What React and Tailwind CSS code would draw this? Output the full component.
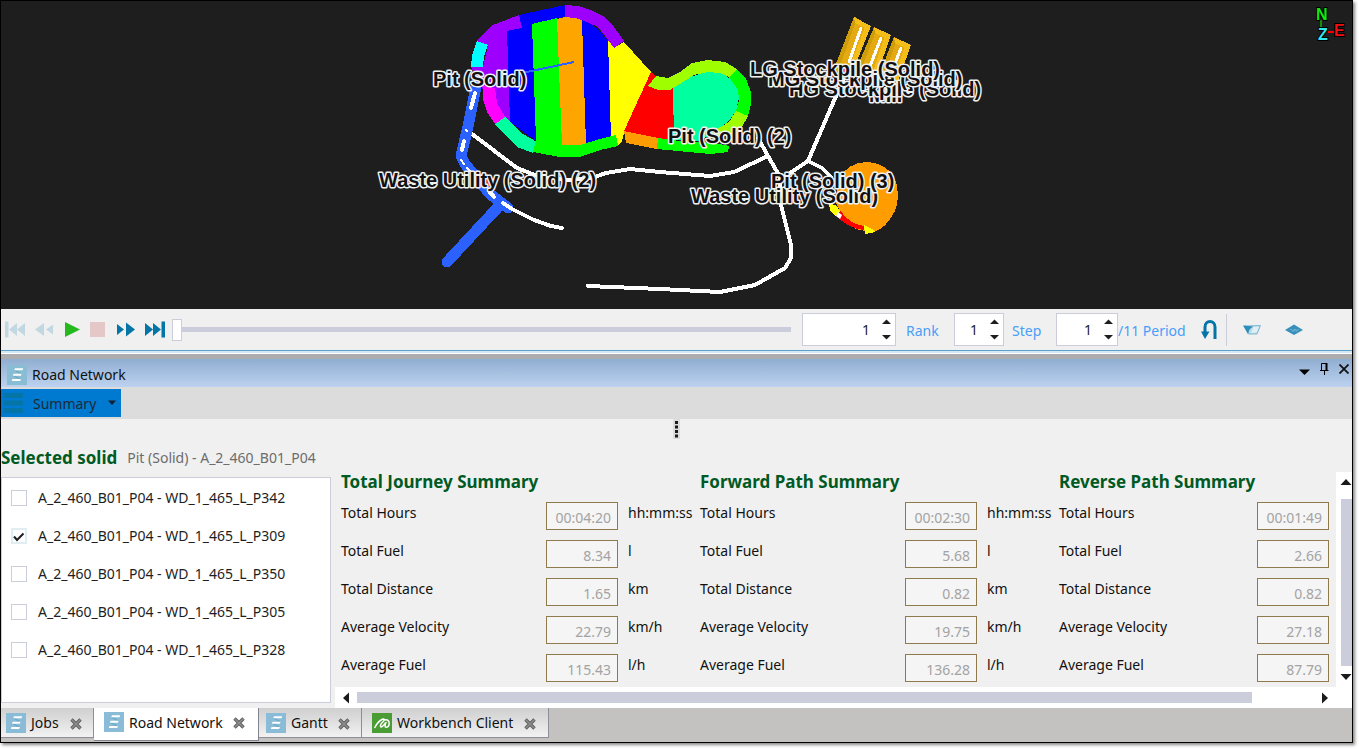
import React, { useState } from "react";

const PATHS = ["P342", "P309", "P350", "P305", "P328"];

const SUMMARIES = [
  { title: "Total Journey Summary", values: ["00:04:20", "8.34", "1.65", "22.79", "115.43"], units: true },
  { title: "Forward Path Summary", values: ["00:02:30", "5.68", "0.82", "19.75", "136.28"], units: true },
  { title: "Reverse Path Summary", values: ["00:01:49", "2.66", "0.82", "27.18", "87.79"], units: false },
];

const METRICS = [
  ["Total Hours", "hh:mm:ss"],
  ["Total Fuel", "l"],
  ["Total Distance", "km"],
  ["Average Velocity", "km/h"],
  ["Average Fuel", "l/h"],
];

const LABELS = [
  ["Mill", 869, 102],
  ["HG Stockpile (Solid)", 789, 96],
  ["MG Stockpile (Solid)", 768, 86],
  ["LG Stockpile (Solid)", 750, 76],
  ["Pit (Solid)", 433, 86],
  ["Pit (Solid) (2)", 668, 143],
  ["Waste Utility (Solid) (2)", 379, 187],
  ["Waste Utility (Solid)", 691, 203],
  ["Pit (Solid) (3)", 771, 188],
];

function MapView() {
  return (
    <svg viewBox="1 1 1351 308" className="block h-full w-full" role="img" aria-label="Mine map">
      <g shapeRendering="crispEdges">
        {/* main pit */}
        <polygon fill="#9d00ff" points="477,41 483,34 493,25 519,15 523,28 508,31 511,122 505,118 497,103 495,90 483,90 471,67 483,67 488,45" />
        <polygon fill="#9d00ff" points="565,5 578,6 591,10 603,16 614,27 624,41 614,48 608,40 598,27 582,20 565,17" />
        <polygon fill="#0000ff" points="519,15 565,5 565,17 557,18 532,24 536,141 510,122 507,31 522,28" />
        <polygon fill="#00ffff" points="477,41 488,45 484,56 483,67 471,67 472,55" />
        <polygon fill="#ff00ff" points="483,86 495,88 497,103 505,117 495,124 487,112 483,99" />
        <polygon fill="#00ff9f" points="495,124 505,117 523,134 537,142 533,153 517,147" />
        <polygon fill="#00ff00" points="532,24 557,18 562,145 536,141" />
        <polygon fill="#ffa500" points="557,19 565,17 575,18 582,20 586,145 562,146" />
        <polygon fill="#0000ff" points="582,20 592,25 600,31 608,41 611,138 586,143" />
        <polygon fill="#ffff00" points="608,40 614,48 624,42 651,72 624,133 622,141 618,146 611,138" />
        <polygon fill="#00ff00" points="536,141 562,145 580,145 600,139 616,135 618,146 600,150 580,157 560,157 533,152" />
        <path d="M522 73L574 62" stroke="#2b5fff" strokeWidth="2" />
        {/* east pit */}
        <polygon fill="#ff0000" points="651,72 656,77 648,85 673,88 674,141 658,138 624,131" />
        <polygon fill="#00ff9f" points="673,88 690,77 708,71 722,73 732,80 738,90 739,98 736,111 728,122 714,132 700,141 674,140" />
        <polygon fill="#9fff00" points="656,76 668,78 680,72 692,63 708,60 725,62 737,69 729,77 720,73 708,72 694,75 680,84 670,90 658,90 648,86" />
        <polygon fill="#00ff00" points="737,69 746,79 751,92 751,104 748,116 736,111 739,100 738,90 729,77" />
        <polygon fill="#9fff00" points="748,116 742,127 732,134 718,138 715,130 729,122 736,111" />
        <polygon fill="#ff9d00" points="624,131 658,138 657,149 626,143" />
        <polygon fill="#00ff00" points="658,138 680,141 715,143 729,146 728,152 710,154 657,149" />
        {/* south-east pit */}
        <path fill="#ff9d00" d="M867 162C878 162 889 168 894 177C899 187 899 202 895 211C889 222 882 231 872 232L855 229L842 215L836 203L838 180C844 168 855 162 867 162Z" />
        <path fill="#ff0000" d="M835 215L840 210Q850 225 866 226L864 230Q849 229 835 215Z" />
        <polygon fill="#ffff00" points="829,203 837,206 840,211 836,216 830,211" />
        <polygon fill="#ffff00" points="864,225 872,229 875,232 865,234" />
        {/* stockpiles */}
        <polygon fill="#e5aa12" points="854,17 871,26 853,71 834,69" />
        <polygon fill="#cf9c0a" points="854,17 857,18 838,72 834,69" />
        <polygon fill="#f4bd18" points="854,17 871,26 869,30 855,23" />
        <polygon fill="#f4bd18" points="866,24 871,26 853,71 849,69" />
        <polygon fill="#e5aa12" points="874,27 891,35 876,78 856,70" />
        <polygon fill="#cf9c0a" points="874,27 877,29 860,72 856,70" />
        <polygon fill="#f4bd18" points="874,27 891,35 889,40 875,33" />
        <polygon fill="#f4bd18" points="886,33 891,35 876,78 872,74" />
        <polygon fill="#e5aa12" points="894,37 911,45 897,84 879,75" />
        <polygon fill="#cf9c0a" points="894,37 897,39 884,76 879,75" />
        <polygon fill="#f4bd18" points="894,37 911,45 909,50 895,43" />
        <polygon fill="#f4bd18" points="906,43 911,45 897,84 893,80" />
        {/* haul roads */}
        <g fill="none" stroke="#fff" strokeLinecap="round" strokeLinejoin="round" strokeWidth="4">
          <path d="M472 134L517 168L540 177L570 180L592 178L606 173L630 169L660 172L710 176L734 172L768 156" />
          <path d="M758 138L768 156L780 177L781 205L791 245L791 258L785 268L755 285L720 292L660 289L588 286" />
          <path d="M781 179L808 161L822 168L831 177M808 161L836 96L849 68" />
          <path d="M861 28L849 62M881 38L870 66M901 48L894 66" strokeWidth="3" />
        </g>
        {/* highlighted journey */}
        <g fill="none" stroke="#2b62ff" strokeLinecap="round" strokeLinejoin="round" strokeWidth="11">
          <path d="M477 82L469 122L461 156L465 164L490 194L508 208M500 205L447 262" />
        </g>
        <g fill="none" stroke="#fff" strokeLinecap="round" strokeWidth="4">
          <path d="M475 93L471 108M464 141L462 150M489 191L494 197M503 203L512 209L534 220L551 226L562 228" />
          <path d="M466 130L467 131M461 160L464 164M467 168L470 171" strokeWidth="2" />
        </g>
      </g>
      <path fill="#fff" d="M838 212l4 3-2 4-4-3z" />
      <path fill="#e22" d="M837 68h8v4h-8zM860 78h5v4h-5zM776 198h6v5h-6zM484 180h8v6h-8z" />
      <g fontFamily="'Liberation Sans', Arial, sans-serif" fontSize="20" fontWeight="700" fill="#111" stroke="#f1f1f1" strokeWidth="3" paintOrder="stroke" strokeLinejoin="round">
        {LABELS.map(([text, x, y]) => (
          <text key={text} x={x} y={y}>{text}</text>
        ))}
      </g>
      {/* orientation axes */}
      <path d="M1321 20V30" stroke="#0f0" strokeWidth="1" />
      <path d="M1328 32H1334" stroke="#f00" strokeWidth="2" />
      <g fontFamily="'Liberation Sans', Arial, sans-serif" fontSize="16" fontWeight="700" stroke="#000" strokeWidth="2" paintOrder="stroke">
        <text x="1316" y="20" fill="#10e810">N</text>
        <text x="1334" y="36" fill="#f01010">E</text>
        <text x="1318" y="40" fill="#35e8f0">Z</text>
      </g>
    </svg>
  );
}

function SheetIcon({ pale }) {
  return (
    <svg viewBox="0 0 20 20" className="size-5 shrink-0" aria-hidden="true">
      <rect width="20" height="20" fill={pale ? "#88bdd3" : "#8abbd7"} />
      <path d="M7.500 5L14 8.800M6.500 10.500L13 14" fill="none" stroke="#6aa9c6" strokeWidth="1.200" />
      <path d="M8 3.300h8.200l-.7 2H7.200zM6.600 8.800h8l-.7 2H5.900zM5.500 14h8.400l-.7 2H4.800z" fill="#fff" />
    </svg>
  );
}

function WorkbenchIcon() {
  return (
    <svg viewBox="0 0 20 20" className="size-5 shrink-0" aria-hidden="true">
      <rect width="20" height="20" fill="#4a9d34" />
      <path d="M2.800 14.500C4.500 11 7.500 7.500 10.500 6.200C12.800 5.300 12.500 7.500 10.500 9.200C8.500 11 8 13.500 9 14C10.500 14.500 12 11.500 14 9.500M12.500 7C15.500 6 17.200 8 17.200 10.500C17.200 13 15.500 14.500 14 14.300C12.500 14 13 11.500 14 9.500" fill="none" stroke="#fff" strokeWidth="1.500" strokeLinecap="round" />
    </svg>
  );
}

function Transport({ label, d, color }) {
  return (
    <button type="button" aria-label={label} className="size-5">
      <svg viewBox="0 0 20 20" className="size-5" fill={color} aria-hidden="true">
        <path d={d} />
      </svg>
    </button>
  );
}

function Spinner({ label, className }) {
  const [value, setValue] = useState(1);
  return (
    <div className={"flex h-[33px] items-center border border-[#cccddb] bg-white pr-1 " + className}>
      <input
        aria-label={label}
        value={value}
        onChange={(e) => setValue(Number(e.target.value) || 0)}
        className="w-0 min-w-0 grow bg-transparent text-right text-sm text-[#1e1e1e] outline-none"
      />
      <div className="ml-3 flex flex-col gap-[9px]">
        <button type="button" aria-label={"Increase " + label} onClick={() => setValue(value + 1)}>
          <svg viewBox="0 0 9 6" className="block h-[6px] w-[9px]" aria-hidden="true"><path d="M4.500 0.500L9 5H0z" fill="#1e1e1e" /></svg>
        </button>
        <button type="button" aria-label={"Decrease " + label} onClick={() => setValue(value - 1)}>
          <svg viewBox="0 0 9 6" className="block h-[6px] w-[9px]" aria-hidden="true"><path d="M0 1H9L4.500 5.500z" fill="#1e1e1e" /></svg>
        </button>
      </div>
    </div>
  );
}

function Toolbar() {
  const [position, setPosition] = useState(0);
  return (
    <div className="flex h-[41px] shrink-0 items-center bg-[#f0f0f0] pl-1">
      <div className="flex gap-2">
        <Transport label="First" color="#c1d8e2" d="M0 1.500h3.500v16H0zM12 3v13L4 9.500zM20 3v13L12 9.500z" />
        <Transport label="Previous" color="#c1d8e2" d="M11 3v13L2 9.500zM22 3v13L13 9.500z" />
        <Transport label="Play" color="#24ba1e" d="M4 2L19 9.500L4 17z" />
        <Transport label="Stop" color="#e6c7c8" d="M1 2h15v15H1z" />
        <Transport label="Next" color="#0575a8" d="M-2 2.500v14l9-7zM9 2.500v14l9-7z" />
        <Transport label="Last" color="#0575a8" d="M0 3v13L8 9.500zM8 3v13L16 9.500zM16.500 1.500H20v16h-3.500z" />
      </div>
      <input
        type="range"
        aria-label="Timeline"
        min="0"
        max="100"
        value={position}
        onChange={(e) => setPosition(Number(e.target.value))}
        className="ml-[7px] h-[22px] w-0 min-w-0 grow appearance-none bg-transparent [&::-webkit-slider-runnable-track]:h-[5px] [&::-webkit-slider-runnable-track]:bg-[#cccddb] [&::-webkit-slider-thumb]:-mt-[8px] [&::-webkit-slider-thumb]:h-[22px] [&::-webkit-slider-thumb]:w-[10px] [&::-webkit-slider-thumb]:appearance-none [&::-webkit-slider-thumb]:border [&::-webkit-slider-thumb]:border-[#cccddb] [&::-webkit-slider-thumb]:bg-white"
      />
      <Spinner label="Rank" className="ml-[11px] w-[94px]" />
      <span className="w-[58px] pt-[2px] pl-[10px] text-sm text-[#4a9df8]">Rank</span>
      <Spinner label="Step" className="w-[50px]" />
      <span className="w-[52px] pt-[2px] pl-2 text-sm text-[#4a9df8]">Step</span>
      <Spinner label="Period" className="w-[62px]" />
      <span className="w-[80px] pt-[2px] text-sm whitespace-nowrap text-[#4a9df8]">/11 Period</span>
      <button type="button" aria-label="Loop" className="h-[22px] w-5">
        <svg viewBox="0 0 20 22" className="h-[22px] w-5" aria-hidden="true">
          <path d="M7 14V8a5 5.500 0 0 1 10 0V20" fill="none" stroke="#0575a8" strokeWidth="3" />
          <path d="M3 12.500h8.500L7 20z" fill="#0575a8" />
        </svg>
      </button>
      <div className="ml-2 h-8 w-px bg-[#cccddb]" />
      <button type="button" aria-label="Pit view" className="ml-4 h-5 w-[18px]">
        <svg viewBox="0 0 18 20" className="h-5 w-[18px]" aria-hidden="true">
          <path d="M1 6L17.500 5.500L14 14H5.500z" fill="#b9dbe9" stroke="#69adcd" strokeWidth=".8" />
          <path d="M0 5.500L10 6.500L6.500 9.500L5 14z" fill="#2f8db9" />
          <path d="M10.500 7l5.500-.5-2.500 6-5.500.5z" fill="#e2eff5" />
        </svg>
      </button>
      <button type="button" aria-label="Layer view" className="mr-[49px] ml-6 h-5 w-[18px]">
        <svg viewBox="0 0 18 20" className="h-5 w-[18px]" aria-hidden="true">
          <path d="M9 4.500L18 10L9 15L0 10z" fill="#3690bb" />
          <path d="M5 9l3 1.500 2-1.500 2 1.500 2-1M7 11.500l3-1 2 1" fill="none" stroke="#83bdd7" strokeWidth=".7" />
        </svg>
      </button>
    </div>
  );
}

function PanelHeader() {
  return (
    <header className="flex h-[28px] shrink-0 items-center bg-linear-to-b from-[#90aed1] to-[#bdd2f0] pt-[3px] pl-[6px]">
      <SheetIcon pale />
      <h1 className="ml-[5px] grow text-sm text-[#111]">Road Network</h1>
      <div className="flex items-center gap-[9px] pr-[3px] pb-[11px]">
        <button type="button" aria-label="Panel menu">
          <svg viewBox="0 0 12 12" className="block size-3" aria-hidden="true"><path d="M0 6.500h11L5.500 12z" /></svg>
        </button>
        <button type="button" aria-label="Pin panel">
          <svg viewBox="0 0 10 14" className="block h-[14px] w-[10px]" fill="none" stroke="#000" aria-hidden="true">
            <path d="M1.500 8V1.500H6.500V8M0 8.500H8.500M4.500 9v4" /><path d="M6.500 1v7" strokeWidth="2" />
          </svg>
        </button>
        <button type="button" aria-label="Close panel">
          <svg viewBox="0 0 10 10" className="block size-[10px]" aria-hidden="true"><path d="M.500 .500L9.500 9.500M9.500 .500L.500 9.500" stroke="#111" strokeWidth="1.800" /></svg>
        </button>
      </div>
    </header>
  );
}

function PathList() {
  const [checked, setChecked] = useState({ P309: true });
  return (
    <section className="flex w-[334px] shrink-0 flex-col pr-1 pb-[5px]">
      <div className="flex h-[38px] items-center gap-[10px] whitespace-nowrap">
        <h2 className="text-[17px] leading-6 font-bold text-[#005a24]">Selected solid</h2>
        <p className="text-sm text-[#6c6c6c]">Pit (Solid) - A_2_460_B01_P04</p>
      </div>
      <ul className="grow border border-[#cccddb] bg-white pt-px">
        {PATHS.map((p) => (
          <li key={p} className="h-[38px]">
            <label className="flex h-full items-center gap-[11px] pl-[9px] text-sm whitespace-nowrap text-[#1e1e1e]">
              <span className="grid size-4 place-items-center">
                <input
                  type="checkbox"
                  checked={!!checked[p]}
                  onChange={() => setChecked({ ...checked, [p]: !checked[p] })}
                  className="peer col-start-1 row-start-1 size-4 appearance-none border border-[#cccddb] bg-white checked:border-2 checked:border-[#e0eef3]"
                />
                <svg viewBox="0 0 16 16" className="pointer-events-none invisible col-start-1 row-start-1 size-4 peer-checked:visible" aria-hidden="true">
                  <path d="M3 8.500L6 12L12.500 5.500" fill="none" stroke="#1e1e1e" strokeWidth="2" />
                </svg>
              </span>
              {"A_2_460_B01_P04 - WD_1_465_L_" + p}
            </label>
          </li>
        ))}
      </ul>
    </section>
  );
}

function Summary({ data }) {
  return (
    <section className={data.units ? "w-[359px] shrink-0" : "min-w-0 grow pr-[7px]"}>
      <h2 className="h-[25px] text-[17px] leading-5 font-bold whitespace-nowrap text-[#005a24]">{data.title}</h2>
      {METRICS.map(([name, unit], i) => (
        <div key={name} className="flex h-[38px] items-start pt-[5px] text-sm leading-[22px] whitespace-nowrap text-[#111]">
          <label htmlFor={data.title + i} className="grow leading-[22px]">{name}</label>
          <input
            id={data.title + i}
            disabled
            value={data.values[i]}
            readOnly
            className="h-[28px] w-[72px] border border-[#8f7a4c] bg-[#f5f5f5] px-[6px] pt-[2px] text-right text-sm text-[#a3a3a3]"
          />
          {data.units && <span className="w-[82px] pl-[10px] leading-[22px]">{unit}</span>}
        </div>
      ))}
    </section>
  );
}

function Arrow({ label, d }) {
  return (
    <button type="button" aria-label={label} className="shrink-0">
      <svg viewBox="0 0 12 12" className="block size-3" aria-hidden="true"><path d={d} fill="#1a1a1a" /></svg>
    </button>
  );
}

function SummaryPanel() {
  return (
    <div className="mt-[33px] flex min-w-0 grow flex-col">
      <div className="flex grow">
        <div className="flex min-w-0 grow overflow-hidden pl-[6px]">
          {SUMMARIES.map((s) => <Summary key={s.title} data={s} />)}
        </div>
        <div className="flex w-4 shrink-0 flex-col items-end overflow-hidden bg-white py-1">
          <Arrow label="Scroll up" d="M6 3L11.500 9H.500z" />
          <div className="mt-[11px] mb-[5px] w-[11px] grow bg-[#cccddb]" />
          <Arrow label="Scroll down" d="M6 9L11.500 3H.500z" />
        </div>
      </div>
      <div className="flex h-[21px] shrink-0 items-center bg-white pr-[21px] pl-[5px]">
        <Arrow label="Scroll left" d="M3 6L9 .500V11.500z" />
        <div className="ml-[5px] grow pr-[67px]">
          <div className="h-[11px] bg-[#cccddb]" />
        </div>
        <Arrow label="Scroll right" d="M9 6L3 .500V11.500z" />
      </div>
    </div>
  );
}

function Tab({ name, active, icon, className }) {
  const shape = active
    ? "h-[33px] bg-white border-[#82838d] pb-[4px]"
    : "h-[30px] bg-linear-to-b from-[#cfcfcf] to-[#f2f2f2] border-[#8d8e98]";
  return (
    <div className={"flex items-center border-r border-b text-sm whitespace-nowrap text-[#111] " + shape + " " + className}>
      <a href="#" className="flex grow items-center gap-[5px]">
        {icon}
        <span className="pt-px">{name}</span>
      </a>
      <button type="button" aria-label={"Close " + name} className="pt-[2px]">
        <svg viewBox="0 0 12 12" className="block size-3" aria-hidden="true">
          <path d="M1.500 1.500L10.500 10.500M10.500 1.500L1.500 10.500" stroke="#5a5a5a" strokeWidth="3.400" />
          <path d="M1.800 1.800L10.200 10.200M10.200 1.800L1.800 10.200" stroke="#8f8f8f" strokeWidth="1.600" />
        </svg>
      </button>
    </div>
  );
}

export default function App() {
  return (
    <div className="flex h-screen min-h-[640px] bg-white pr-[6px] pb-[6px] font-['Noto_Sans','Open_Sans',sans-serif]">
      <div className="flex min-w-0 grow flex-col border border-black bg-[#f0f0f0] shadow-[2px_2px_3px_#888]">
        <main className="min-h-0 grow bg-[#1e1e1e]">
          <MapView />
        </main>
        <Toolbar />
        <div className="h-[9px] shrink-0 border-t border-[#5ba0c8] bg-[#d4e7f5] pt-[2px]">
          <div className="h-[6px] border-t border-white bg-[#acabad]" />
        </div>
        <PanelHeader />
        <div className="h-8 shrink-0 bg-[#dcdcdc] pt-[2px]">
          <button type="button" className="flex h-[28px] w-[120px] items-center bg-[#007ad0] text-sm text-[#1c2a36]">
            <svg viewBox="0 0 22 20" className="h-5 w-[22px]" fill="#0575a8" aria-hidden="true">
              <path d="M3 0h19v5H3zM3 7.500h19v5H3zM3 15h19v5H3z" />
            </svg>
            <span className="ml-[10px] grow pt-[2px] text-left">Summary</span>
            <svg viewBox="0 0 10 10" className="mr-1 size-[10px]" aria-hidden="true"><path d="M1 2.500h8L5 7z" fill="#14202c" /></svg>
          </button>
        </div>
        <div className="flex h-[20px] shrink-0 items-center justify-center">
          <svg viewBox="0 0 7 20" className="h-5 w-[7px]" aria-hidden="true">
            <rect width="7" height="20" fill="#dcdcdc" />
            <path d="M2 2h3v3H2zM2 6.500h3v3H2zM2 11h3v3H2zM2 15.500h3v3H2z" fill="#1a1a1a" />
          </svg>
        </div>
        <div className="flex h-[269px] shrink-0">
          <PathList />
          <SummaryPanel />
        </div>
        <nav aria-label="Documents" className="flex h-[34px] shrink-0 items-start bg-[#c3c2c0]">
          <Tab name="Jobs" icon={<SheetIcon />} className="w-[93px] pl-[5px] pr-[11px]" />
          <Tab name="Road Network" active icon={<SheetIcon />} className="w-[165px] pl-[10px] pr-[13px]" />
          <Tab name="Gantt" icon={<SheetIcon />} className="w-[103px] pl-[7px] pr-[11px]" />
          <Tab name="Workbench Client" icon={<WorkbenchIcon />} className="w-[187px] pl-[10px] pr-[12px]" />
        </nav>
      </div>
    </div>
  );
}
